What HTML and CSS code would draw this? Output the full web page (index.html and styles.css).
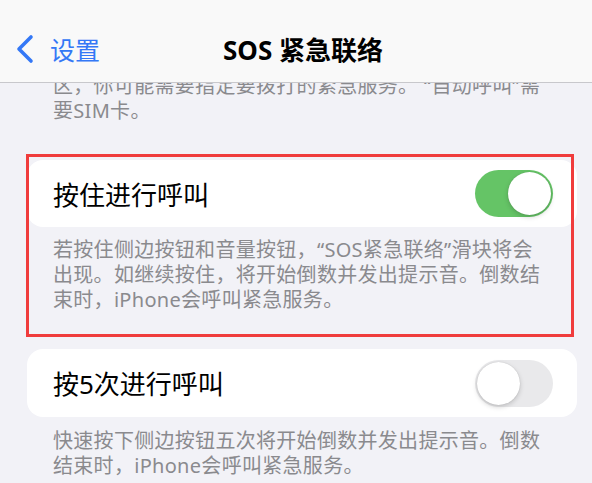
FILE: index.html
```html
<!DOCTYPE html>
<html>
<head>
  <title>SOS紧急联络</title>
  <link rel="stylesheet" href="styles.css">
</head>
<body>
  <div class="screen">
    <div class="navbar">
      <a class="back">
        <svg class="chevron" width="20" height="30" viewBox="0 0 20 30">
          <path d="M16 3 L4 15 L16 27" fill="none" stroke="#3478f6" stroke-width="3.6" stroke-linecap="round" stroke-linejoin="round"/>
        </svg>
        <span>设置</span>
      </a>
      <div class="title">SOS 紧急联络</div>
    </div>

    <div class="content">
      <p class="footer top">区，你可能需要指定要拨打的紧急服务。 “自动呼叫”需<br>要SIM卡。</p>

      <div class="card">
        <span class="label">按住进行呼叫</span>
        <div class="toggle on"><div class="knob"></div></div>
      </div>
      <p class="footer">若按住侧边按钮和音量按钮，“SOS紧急联络”滑块将会<br>出现。如继续按住，将开始倒数并发出提示音。倒数结<br>束时，iPhone会呼叫紧急服务。</p>

      <div class="card second">
        <span class="label">按5次进行呼叫</span>
        <div class="toggle"><div class="knob"></div></div>
      </div>
      <p class="footer">快速按下侧边按钮五次将开始倒数并发出提示音。倒数<br>结束时，iPhone会呼叫紧急服务。</p>
    </div>

    <div class="highlight"></div>
  </div>
</body>
</html>
```

FILE: styles.css
```css
body {
  margin: 0;
  background: #f2f2f7;
  font-family: "Noto Sans", "Noto Sans CJK SC", sans-serif;
}

.screen {
  position: relative;
  width: 592px;
  height: 483px;
  overflow: hidden;
  background: #f2f2f7;
}

.navbar {
  height: 67px;
  padding-top: 15px;
  display: flex;
  align-items: center;
  background: #f9f9f9;
  border-bottom: 1px solid #c8c8cc;
  box-sizing: content-box;
}

.back {
  display: flex;
  align-items: center;
  color: #3478f6;
  font-size: 25px;
  margin-left: 15px;
}

.chevron {
  margin-right: 15px;
}

.title {
  margin-left: 123px;
  font-size: 26px;
  font-weight: bold;
  color: #000;
}

.content {
  height: 400px;
  overflow: hidden;
}

.footer {
  margin: 0;
  padding: 10px 20px 0 53px;
  font-size: 20px;
  line-height: 25px;
  letter-spacing: 0.3px;
  white-space: nowrap;
  color: #8a8a8e;
}

.footer.top {
  margin-top: -10px;
  padding-top: 0;
}

.card {
  display: flex;
  align-items: center;
  justify-content: space-between;
  height: 67px;
  margin: 37px 15px 0 27px;
  padding: 0 24px 0 26px;
  background: #fff;
  border-radius: 16px;
}

.card.second {
  height: 68px;
  margin-top: 37px;
}

.card.second + .footer {
  padding-top: 11px;
}

.label {
  font-size: 26px;
  color: #000;
}

.toggle {
  position: relative;
  width: 78px;
  height: 47px;
  border-radius: 24px;
  background: #e9e9eb;
}

.toggle.on {
  background: #65c466;
}

.knob {
  position: absolute;
  top: 2px;
  left: 2px;
  width: 43px;
  height: 43px;
  border-radius: 50%;
  background: #fff;
  box-shadow: 0 2px 5px rgba(0, 0, 0, 0.18), 0 0 1px rgba(0, 0, 0, 0.2);
}

.toggle.on .knob {
  left: 33px;
}

.highlight {
  position: absolute;
  left: 26px;
  top: 154px;
  width: 548px;
  height: 183px;
  border: 3px solid #f03c3c;
  box-sizing: border-box;
}
```
